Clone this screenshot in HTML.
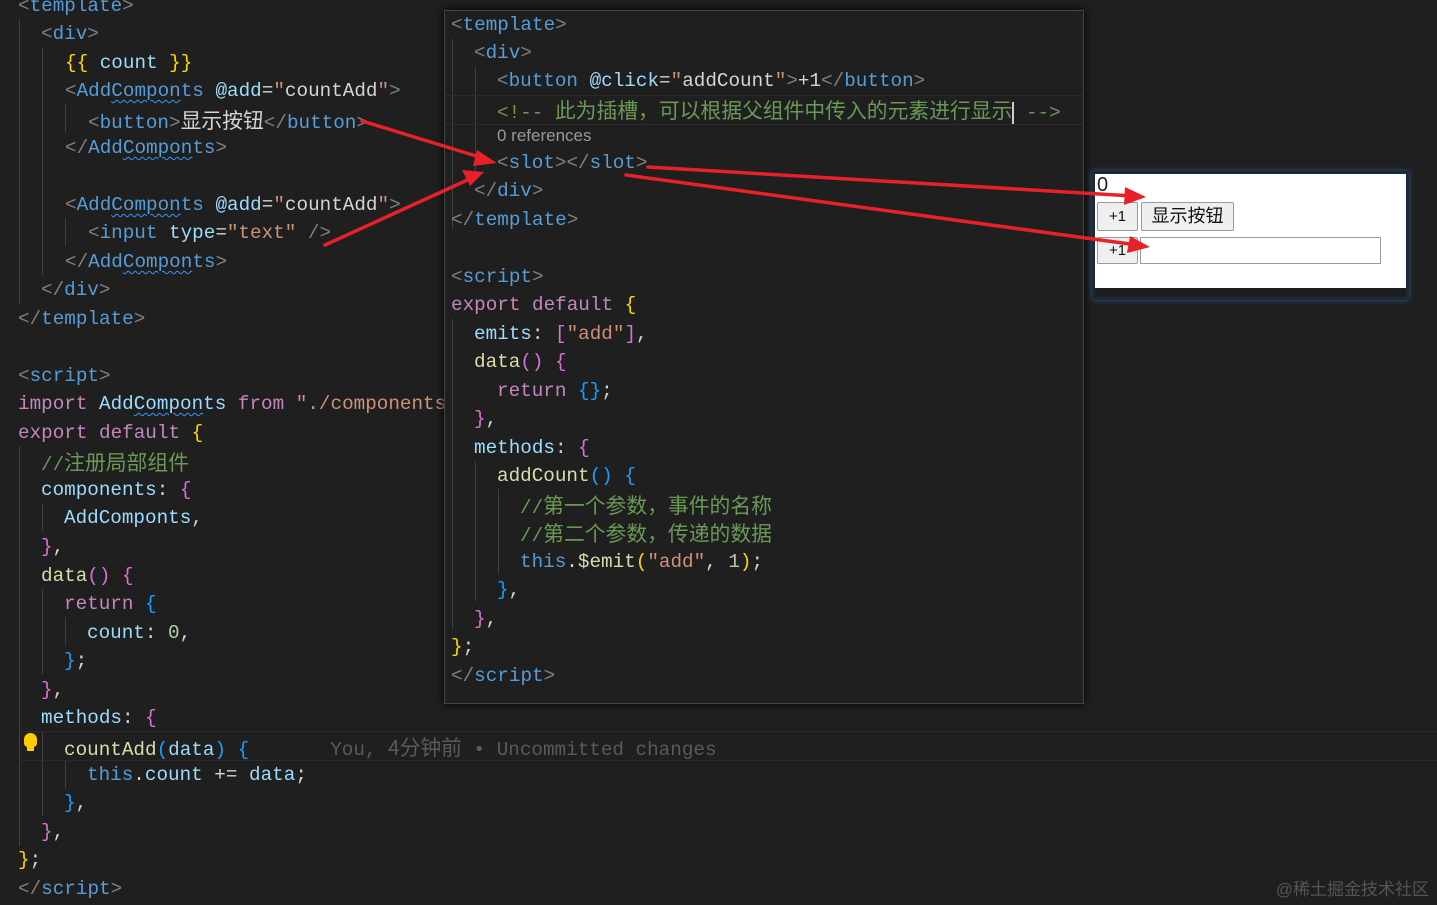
<!DOCTYPE html>
<html><head><meta charset="utf-8"><style>
body{margin:0;width:1437px;height:905px;background:#1f1f1f;overflow:hidden;position:relative;font-family:"Liberation Mono","Noto Sans CJK SC",monospace;font-size:19.3px;}
.l{position:absolute;height:28px;line-height:28px;white-space:pre;color:#d4d4d4;}
.g{color:#808080}.t{color:#569cd6}.a{color:#9cdcfe}.s{color:#ce9178}.c{color:#6a9955}.k{color:#c586c0}
.y{color:#ffd700}.p{color:#da70d6}.b{color:#179fff}.f{color:#dcdcaa}.n{color:#b5cea8}.w{color:#d4d4d4}
.u{text-decoration:underline wavy #3794ff;text-decoration-thickness:1px;text-underline-offset:3px}
.cj{font-family:"Noto Sans CJK SC",sans-serif;font-size:20.8px;}
.guide{position:absolute;width:1px;background:#404040}
#panel{position:absolute;left:444px;top:10px;width:638px;height:692px;background:#1f1f1f;border:1px solid #454545;box-shadow:0 0 8px #000;overflow:hidden}
</style></head><body>
<div class="guide" style="left:19px;top:19px;height:285px"></div>
<div class="guide" style="left:42px;top:47px;height:228px"></div>
<div class="guide" style="left:65px;top:104px;height:28px"></div>
<div class="guide" style="left:65px;top:218px;height:28px"></div>
<div class="guide" style="left:19px;top:446px;height:400px"></div>
<div class="guide" style="left:42px;top:503px;height:28px"></div>
<div class="guide" style="left:42px;top:589px;height:85px"></div>
<div class="guide" style="left:65px;top:617px;height:28px"></div>
<div class="guide" style="left:42px;top:731px;height:85px"></div>
<div class="guide" style="left:65px;top:760px;height:28px"></div>

<div class="l" style="left:18px;top:-8px"><span class="g">&lt;</span><span class="t">template</span><span class="g">&gt;</span></div>
<div class="l" style="left:41px;top:20px"><span class="g">&lt;</span><span class="t">div</span><span class="g">&gt;</span></div>
<div class="l" style="left:65px;top:49px"><span class="y">{{</span> <span class="a">count</span> <span class="y">}}</span></div>
<div class="l" style="left:65px;top:77px"><span class="g">&lt;</span><span class="t">Add<span class="u">Compon</span>ts</span> <span class="a">@add</span>=<span class="s">"</span><span class="w">countAdd</span><span class="s">"</span><span class="g">&gt;</span></div>
<div class="l" style="left:88px;top:105px"><span class="g">&lt;</span><span class="t">button</span><span class="g">&gt;</span><span class="cj">显示按钮</span><span class="g">&lt;/</span><span class="t">button</span><span class="g">&gt;</span></div>
<div class="l" style="left:65px;top:134px"><span class="g">&lt;/</span><span class="t">Add<span class="u">Compon</span>ts</span><span class="g">&gt;</span></div>
<div class="l" style="left:65px;top:191px"><span class="g">&lt;</span><span class="t">Add<span class="u">Compon</span>ts</span> <span class="a">@add</span>=<span class="s">"</span><span class="w">countAdd</span><span class="s">"</span><span class="g">&gt;</span></div>
<div class="l" style="left:88px;top:219px"><span class="g">&lt;</span><span class="t">input</span> <span class="a">type</span>=<span class="s">"text"</span> <span class="g">/&gt;</span></div>
<div class="l" style="left:65px;top:248px"><span class="g">&lt;/</span><span class="t">Add<span class="u">Compon</span>ts</span><span class="g">&gt;</span></div>
<div class="l" style="left:41px;top:276px"><span class="g">&lt;/</span><span class="t">div</span><span class="g">&gt;</span></div>
<div class="l" style="left:18px;top:305px"><span class="g">&lt;/</span><span class="t">template</span><span class="g">&gt;</span></div>
<div class="l" style="left:18px;top:362px"><span class="g">&lt;</span><span class="t">script</span><span class="g">&gt;</span></div>
<div class="l" style="left:18px;top:390px"><span class="k">import</span> <span class="a">Add<span class="u">Compon</span>ts</span> <span class="k">from</span> <span class="s">"./components/AddCompon</span></div>
<div class="l" style="left:18px;top:419px"><span class="k">export</span> <span class="k">default</span> <span class="y">{</span></div>
<div class="l" style="left:41px;top:447px"><span class="c">//<span class="cj">注册局部组件</span></span></div>
<div class="l" style="left:41px;top:476px"><span class="a">components</span>: <span class="p">{</span></div>
<div class="l" style="left:64px;top:504px"><span class="a">AddComponts</span>,</div>
<div class="l" style="left:41px;top:533px"><span class="p">}</span>,</div>
<div class="l" style="left:41px;top:562px"><span class="f">data</span><span class="p">()</span> <span class="p">{</span></div>
<div class="l" style="left:64px;top:590px"><span class="k">return</span> <span class="b">{</span></div>
<div class="l" style="left:87px;top:619px"><span class="a">count</span>: <span class="n">0</span>,</div>
<div class="l" style="left:64px;top:647px"><span class="b">}</span>;</div>
<div class="l" style="left:41px;top:676px"><span class="p">}</span>,</div>
<div class="l" style="left:41px;top:704px"><span class="a">methods</span>: <span class="p">{</span></div>
<div style="position:absolute;left:18px;top:731px;width:1419px;height:28px;border-top:1px solid #2a2a2a;border-bottom:1px solid #2a2a2a"></div>
<div style="position:absolute;left:24px;top:733px;width:13px;height:14px;background:#ffcc00;border-radius:7px 7px 4px 4px"></div>
<div style="position:absolute;left:27px;top:747px;width:7px;height:4px;background:#ffcc00"></div>
<div class="l" style="left:64px;top:732px"><span class="f">countAdd</span><span class="b">(</span><span class="a">data</span><span class="b">)</span> <span class="b">{</span>       <span style="color:#5a5a5a">You, <span class="cj">4分钟前</span> • Uncommitted changes</span></div>
<div class="l" style="left:87px;top:761px"><span class="t">this</span>.<span class="a">count</span> += <span class="a">data</span>;</div>
<div class="l" style="left:64px;top:789px"><span class="b">}</span>,</div>
<div class="l" style="left:41px;top:818px"><span class="p">}</span>,</div>
<div class="l" style="left:18px;top:846px"><span class="y">}</span>;</div>
<div class="l" style="left:18px;top:875px"><span class="g">&lt;/</span><span class="t">script</span><span class="g">&gt;</span></div>

<div id="panel">
<div class="guide" style="left:7px;top:28px;height:190px"></div>
<div class="guide" style="left:30px;top:56px;height:113px"></div>
<div class="guide" style="left:7px;top:308px;height:310px"></div>
<div class="guide" style="left:30px;top:450px;height:140px"></div>
<div class="guide" style="left:53px;top:478px;height:85px"></div>
<div style="position:absolute;left:0;top:84px;width:638px;height:28px;border-top:1px solid #2b2b2b;border-bottom:1px solid #2b2b2b"></div>
<div class="l" style="left:6px;top:0px"><span class="g">&lt;</span><span class="t">template</span><span class="g">&gt;</span></div>
<div class="l" style="left:29px;top:28px"><span class="g">&lt;</span><span class="t">div</span><span class="g">&gt;</span></div>
<div class="l" style="left:52px;top:56px"><span class="g">&lt;</span><span class="t">button</span> <span class="a">@click</span>=<span class="s">"</span><span class="w">addCount</span><span class="s">"</span><span class="g">&gt;</span>+1<span class="g">&lt;/</span><span class="t">button</span><span class="g">&gt;</span></div>
<div class="l" style="left:52px;top:84px"><span class="c">&lt;!-- <span class="cj">此为插槽，可以根据父组件中传入的元素进行显示</span><span style="border-left:2px solid #ccc"></span> --&gt;</span></div>
<div style="position:absolute;left:52px;top:115px;font-family:'Liberation Sans',sans-serif;font-size:17px;color:#999">0 references</div>
<div class="l" style="left:52px;top:138px"><span class="g">&lt;</span><span class="t">slot</span><span class="g">&gt;&lt;/</span><span class="t">slot</span><span class="g">&gt;</span></div>
<div class="l" style="left:29px;top:166px"><span class="g">&lt;/</span><span class="t">div</span><span class="g">&gt;</span></div>
<div class="l" style="left:6px;top:195px"><span class="g">&lt;/</span><span class="t">template</span><span class="g">&gt;</span></div>
<div class="l" style="left:6px;top:252px"><span class="g">&lt;</span><span class="t">script</span><span class="g">&gt;</span></div>
<div class="l" style="left:6px;top:280px"><span class="k">export</span> <span class="k">default</span> <span class="y">{</span></div>
<div class="l" style="left:29px;top:309px"><span class="a">emits</span>: <span class="p">[</span><span class="s">"add"</span><span class="p">]</span>,</div>
<div class="l" style="left:29px;top:337px"><span class="f">data</span><span class="p">()</span> <span class="p">{</span></div>
<div class="l" style="left:52px;top:366px"><span class="k">return</span> <span class="b">{}</span>;</div>
<div class="l" style="left:29px;top:394px"><span class="p">}</span>,</div>
<div class="l" style="left:29px;top:423px"><span class="a">methods</span>: <span class="p">{</span></div>
<div class="l" style="left:52px;top:451px"><span class="f">addCount</span><span class="b">()</span> <span class="b">{</span></div>
<div class="l" style="left:75px;top:479px"><span class="c">//<span class="cj">第一个参数，事件的名称</span></span></div>
<div class="l" style="left:75px;top:507px"><span class="c">//<span class="cj">第二个参数，传递的数据</span></span></div>
<div class="l" style="left:75px;top:537px"><span class="t">this</span>.<span class="f">$emit</span><span class="y">(</span><span class="s">"add"</span>, <span class="n">1</span><span class="y">)</span>;</div>
<div class="l" style="left:52px;top:565px"><span class="b">}</span>,</div>
<div class="l" style="left:29px;top:594px"><span class="p">}</span>,</div>
<div class="l" style="left:6px;top:622px"><span class="y">}</span>;</div>
<div class="l" style="left:6px;top:651px"><span class="g">&lt;/</span><span class="t">script</span><span class="g">&gt;</span></div>
</div>

<div style="position:absolute;left:1092px;top:171px;width:317px;height:129px;background:#1a2a3c;box-shadow:0 0 5px #2a5a8a"></div>
<div style="position:absolute;left:1095px;top:174px;width:311px;height:114px;background:#fff;font-family:'Liberation Sans','Noto Sans CJK SC',sans-serif">
<div style="position:absolute;left:2px;top:0;font-size:20px;color:#222">0</div>
<div style="position:absolute;left:2px;top:28px;width:39px;height:27px;background:#efefef;border:1px solid #999;border-radius:2px;font-size:15px;text-align:center;line-height:27px;color:#111">+1</div>
<div style="position:absolute;left:46px;top:28px;width:91px;height:27px;background:#efefef;border:1px solid #999;border-radius:2px;font-size:18px;text-align:center;line-height:27px;color:#111">显示按钮</div>
<div style="position:absolute;left:2px;top:63px;width:39px;height:25px;background:#efefef;border:1px solid #999;border-radius:2px;font-size:15px;text-align:center;line-height:25px;color:#111">+1</div>
<div style="position:absolute;left:45px;top:63px;width:239px;height:25px;background:#fff;border:1px solid #999"></div>
</div>
<div style="position:absolute;left:1095px;top:288px;width:311px;height:9px;background:#1e1e1e"></div>

<svg style="position:absolute;left:0;top:0" width="1437" height="905">
<g stroke="#e8202a" stroke-width="3.5" fill="#e8202a" stroke-linecap="round">
<line x1="362" y1="121" x2="486" y2="159"/><polygon stroke="none" points="497,163 477,150 473,166"/>
<line x1="325" y1="245" x2="474" y2="177"/><polygon stroke="none" points="484,172 462,170 470,186"/>
<line x1="648" y1="167" x2="1133" y2="196"/><polygon stroke="none" points="1146,197 1125,187 1124,205"/>
<line x1="626" y1="175" x2="1137" y2="245"/><polygon stroke="none" points="1150,247 1130,236 1127,253"/>
</g></svg>
<div style="position:absolute;right:8px;top:875px;font-family:'Liberation Sans','Noto Sans CJK SC',sans-serif;font-size:17px;color:#555">@稀土掘金技术社区</div>
</body></html>
